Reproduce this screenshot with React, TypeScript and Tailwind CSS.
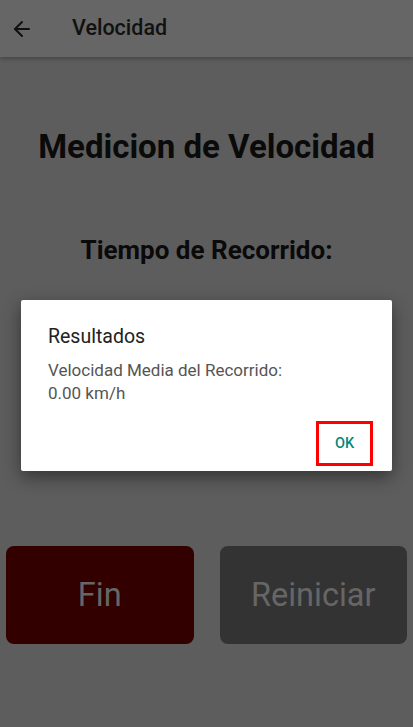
import { ArrowLeft } from "lucide-react";

const font = { fontFamily: "Roboto, 'Liberation Sans', sans-serif" };

const App = () => {
  return (
    <div className="relative h-[727px] w-[413px] overflow-hidden bg-[#5d5d5d]" style={font}>
      {/* barra superior (atenuada) */}
      <div className="flex h-[57px] items-center bg-[#666666] shadow-[0_2px_4px_rgba(0,0,0,0.25)]">
        <ArrowLeft className="ml-[10px] h-[24px] w-[24px] text-[#111]" strokeWidth={2} />
        <span className="ml-[38px] text-[21.5px] font-medium text-[#111]">Velocidad</span>
      </div>

      <div className="flex flex-col items-center">
        <h1 className="mt-[70px] text-[33px] font-bold leading-[40px] text-[#0a0a0a]">
          Medicion de Velocidad
        </h1>
        <h2 className="mt-[67px] text-[26px] font-bold leading-[32px] text-[#0a0a0a]">
          Tiempo de Recorrido:
        </h2>
      </div>

      <div className="absolute left-[6px] right-[6px] top-[546px] flex gap-[26px]">
        <button className="flex h-[98px] flex-1 items-center justify-center rounded-[8px] bg-[#330000] text-[32.5px] text-[#666]">
          Fin
        </button>
        <button className="flex h-[98px] flex-1 items-center justify-center rounded-[8px] bg-[#333333] text-[32.5px] text-[#666]">
          Reiniciar
        </button>
      </div>

      {/* diálogo de resultados */}
      <div className="absolute left-[21px] top-[300px] h-[171px] w-[371px] rounded-[2px] bg-white shadow-[0_6px_18px_rgba(0,0,0,0.45)]">
        <div className="pl-[27px] pt-[24px]">
          <div className="text-[19.5px] leading-[26px] text-[#212121]">Resultados</div>
          <div className="mt-[9px] text-[17px] leading-[23px] text-[#555]">
            Velocidad Media del Recorrido:
            <br />
            0.00 km/h
          </div>
        </div>
        <div className="absolute left-[295px] top-[121px] flex h-[45px] w-[57px] items-center justify-center border-[3px] border-[#ff0000]">
          <span className="text-[14.5px] font-medium text-[#00897b]">OK</span>
        </div>
      </div>
    </div>
  );
};

export default App;
